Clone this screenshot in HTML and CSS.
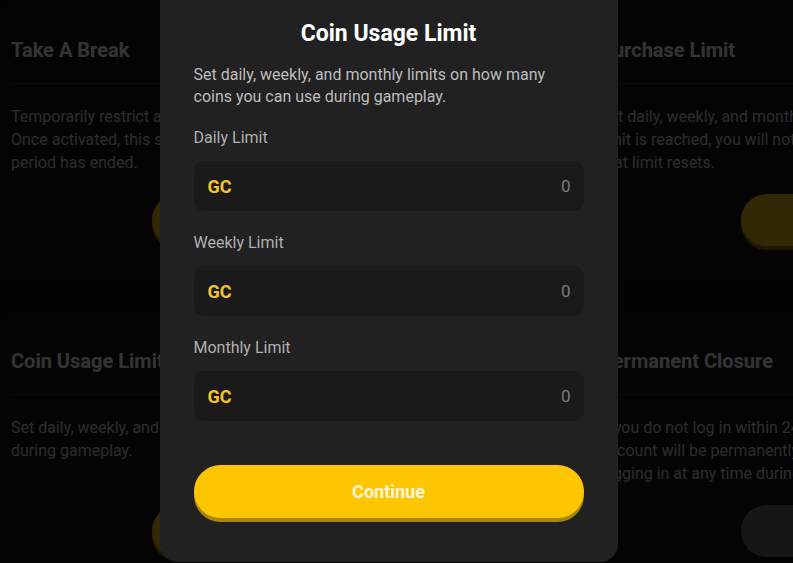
FILE: index.html
```html
<!DOCTYPE html>
<html lang="en">
<head>
<meta charset="utf-8">
<title>Coin Usage Limit</title>
<link rel="stylesheet" href="styles.css">
</head>
<body>
<main class="page">
  <section class="card">
    <h2 class="card-title">Take A Break</h2>
    <p class="card-text">Temporarily restrict access to your account for a set period.<br>Once activated, this setting cannot be reversed until the break<br>period has ended.</p>
    <button class="card-btn yellow">Take A Break</button>
  </section>
  <section class="card">
    <h2 class="card-title">Purchase Limit</h2>
    <p class="card-text">Set daily, weekly, and monthly purchase limits. Once the<br>limit is reached, you will not be able to purchase until<br>that limit resets.</p>
    <button class="card-btn yellow">Set Limit</button>
  </section>
  <section class="card">
    <h2 class="card-title">Coin Usage Limit</h2>
    <p class="card-text">Set daily, weekly, and monthly limits on how many coins you can use<br>during gameplay.</p>
    <button class="card-btn yellow">Set Limit</button>
  </section>
  <section class="card">
    <h2 class="card-title">Permanent Closure</h2>
    <p class="card-text">If you do not log in within 24 hours, your<br>account will be permanently closed. Avoid<br>logging in at any time during this period.</p>
    <button class="card-btn dark">Close Account</button>
  </section>
</main>

<div class="overlay">
  <div class="modal">
    <h1 class="modal-title">Coin Usage Limit</h1>
    <p class="modal-desc">Set daily, weekly, and monthly limits on how many coins you can use during gameplay.</p>

    <div class="field">
      <span class="field-label">Daily Limit</span>
      <div class="field-box"><span class="cur">GC</span><span class="val">0</span></div>
    </div>
    <div class="field">
      <span class="field-label">Weekly Limit</span>
      <div class="field-box"><span class="cur">GC</span><span class="val">0</span></div>
    </div>
    <div class="field">
      <span class="field-label">Monthly Limit</span>
      <div class="field-box"><span class="cur">GC</span><span class="val">0</span></div>
    </div>

    <button class="continue">Continue</button>
  </div>
</div>
</body>
</html>
```
FILE: styles.css
```css
* { box-sizing: border-box; }
html, body {
  margin: 0;
  padding: 0;
  width: 793px;
  height: 563px;
  overflow: hidden;
  background: #0f0f0f;
  font-family: Roboto, "Liberation Sans", sans-serif;
}
.page {
  display: grid;
  grid-template-columns: 570px 570px;
  column-gap: 19px;
  row-gap: 32px;
  padding-top: 3px;
}
.card {
  background: #181818;
  border-radius: 14px;
  padding: 32px 11px 36px;
  display: flex;
  flex-direction: column;
}
.card-title {
  margin: 0;
  font-size: 20px;
  line-height: 30px;
  font-weight: 700;
  color: #ffffff;
  padding-bottom: 18px;
  border-bottom: 1px solid #333333;
}
.card-text {
  margin: 21px 0 20px;
  font-size: 16px;
  line-height: 23px;
  color: #d8d8d8;
}
.card-btn {
  margin-top: auto;
  margin-left: 141px;
  width: 300px;
  height: 52px;
  border: none;
  border-radius: 26px;
  font: 700 17px Roboto, sans-serif;
  color: transparent;
}
.card-btn.yellow { background: #ffc51a; box-shadow: 0 4px 0 #a07c00; }
.card-btn.dark { background: #6e6e6e; }

.overlay {
  position: fixed;
  inset: 0;
  background: rgba(0, 0, 0, 0.8);
  display: flex;
  justify-content: center;
  align-items: flex-end;
  padding-bottom: 1px;
}
.modal {
  width: 458px;
  transform: translateX(-8px);
  background: #212121;
  border-radius: 18px;
  padding: 40px 34px 40px;
  display: flex;
  flex-direction: column;
  margin-top: -20px;
}
.modal-title {
  margin: 0;
  text-align: center;
  font-size: 23px;
  line-height: 28px;
  font-weight: 700;
  color: #ffffff;
}
.modal-desc {
  margin: 16px 0 19px;
  font-size: 16px;
  line-height: 22px;
  color: #bdbdbd;
}
.field { display: flex; flex-direction: column; gap: 12px; margin-bottom: 21px; }
.field:last-of-type { margin-bottom: 0; }
.field-label {
  font-size: 16px;
  line-height: 22px;
  color: #b0b0b0;
}
.field-box {
  height: 50px;
  background: #1a1a1a;
  border-radius: 10px;
  display: flex;
  align-items: center;
  justify-content: space-between;
  padding: 0 13px 0 14px;
}
.cur { color: #f3c231; font-weight: 700; font-size: 18px; }
.val { color: #7a7a7a; font-size: 17px; }
.continue {
  margin-top: 44px;
  height: 53px;
  border: none;
  border-radius: 27px;
  background: #fec600;
  box-shadow: 0 4px 0 #a8860a;
  color: #fff6dc;
  font: 700 18px Roboto, "Liberation Sans", sans-serif;
  margin-bottom: 4px;
}
```
